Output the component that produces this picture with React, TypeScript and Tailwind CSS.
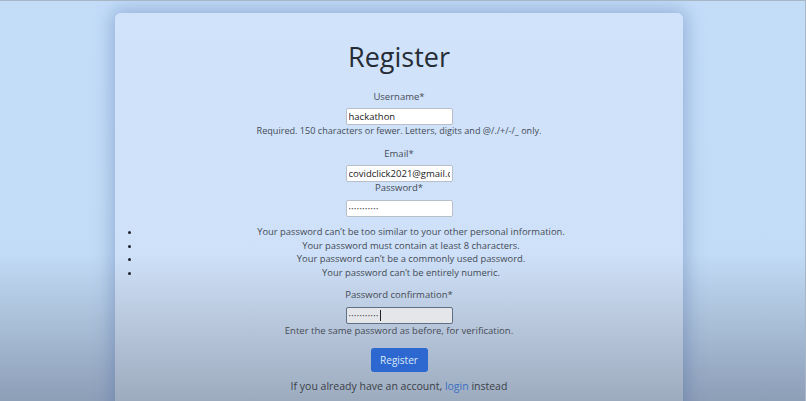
import React from "react";

const font = { fontFamily: '"Open Sans", "DejaVu Sans", sans-serif' };

const rules = [
  "Your password can’t be too similar to your other personal information.",
  "Your password must contain at least 8 characters.",
  "Your password can’t be a commonly used password.",
  "Your password can’t be entirely numeric.",
];

export default function App() {
  return (
    <div
      className="h-[401px] w-[806px] overflow-hidden border-t border-r border-[#a9b6c6] bg-[linear-gradient(to_bottom,#c3ddf9_0%,#c2dbf6_63%,#adc3dc_78%,#8d9eb7_100%)]"
      style={font}
    >
      <div className="ml-[115px] mt-[12px] h-[400px] w-[568px] rounded-[6px] bg-[linear-gradient(to_bottom,#d0e3fb_0%,#cee1f9_60%,#bccbe0_75%,#9dabbf_97%)] px-[13px] pt-[29px] text-[#454b55] shadow-[0_0_18px_4px_rgba(70,100,160,0.35)]">
        <div className="flex flex-col items-center">
          <h1 className="text-[27px] leading-[30px] text-[#262c35]">Register</h1>

          <label className="mt-[19px] text-[9.5px] leading-[12px]">Username*</label>
          <input
            readOnly
            value="hackathon"
            className="mt-[5px] block h-[17px] w-[107px] rounded-[2px] border border-[#b8bfc9] bg-white px-[2px] text-[9.5px] text-[#222] outline-none"
          />
          <p className="text-[9.1px] leading-[12px]">
            Required. 150 characters or fewer. Letters, digits and @/./+/-/_ only.
          </p>

          <label className="mt-[11px] text-[9.5px] leading-[12px]">Email*</label>
          <input
            readOnly
            value="covidclick2021@gmail.com"
            className="mt-[5px] block h-[17px] w-[107px] rounded-[2px] border border-[#b8bfc9] bg-white px-[2px] text-[9.5px] text-[#222] outline-none"
          />
          <label className="text-[9.5px] leading-[12px]">Password*</label>
          <input
            readOnly
            type="password"
            value="hackathon12"
            className="mt-[6px] block h-[17px] w-[107px] rounded-[2px] border border-[#b8bfc9] bg-white px-[2px] text-[6px] tracking-[0.5px] text-[#555] outline-none"
          />
        </div>

        <ul className="-mr-[11px] mt-[8px] list-disc pl-[13px] text-[9.4px] leading-[13.5px] text-[#454b55] marker:text-[#1e2228]">
          {rules.map((r) => (
            <li key={r} className="text-center">
              {r}
            </li>
          ))}
        </ul>

        <div className="flex flex-col items-center">
          <label className="mt-[10px] text-[9.5px] leading-[12px]">Password confirmation*</label>
          <div className="relative mt-[6px]">
            <input
              readOnly
              type="password"
              value="hackathon12"
              className="block h-[17px] w-[107px] rounded-[2px] border-[1.5px] border-[#5f6f86] bg-[#e4e6ea] px-[2px] text-[6px] tracking-[0.5px] text-[#555] outline-none"
            />
            <span className="absolute left-[34px] top-[3px] h-[11px] w-px bg-[#222]" />
          </div>
          <p className="mt-[1px] text-[9.5px] leading-[12px]">
            Enter the same password as before, for verification.
          </p>

          <button className="mt-[11px] h-[24px] w-[57px] rounded-[3px] bg-[#2c68cf] text-[10px] text-[#dde9fb]">
            Register
          </button>

          <p className="mt-[8px] text-[10.5px] leading-[12px] text-[#3a3f47]">
            If you already have an account, <a className="text-[#3b6fc2]">login</a> instead
          </p>
        </div>
      </div>
    </div>
  );
}
